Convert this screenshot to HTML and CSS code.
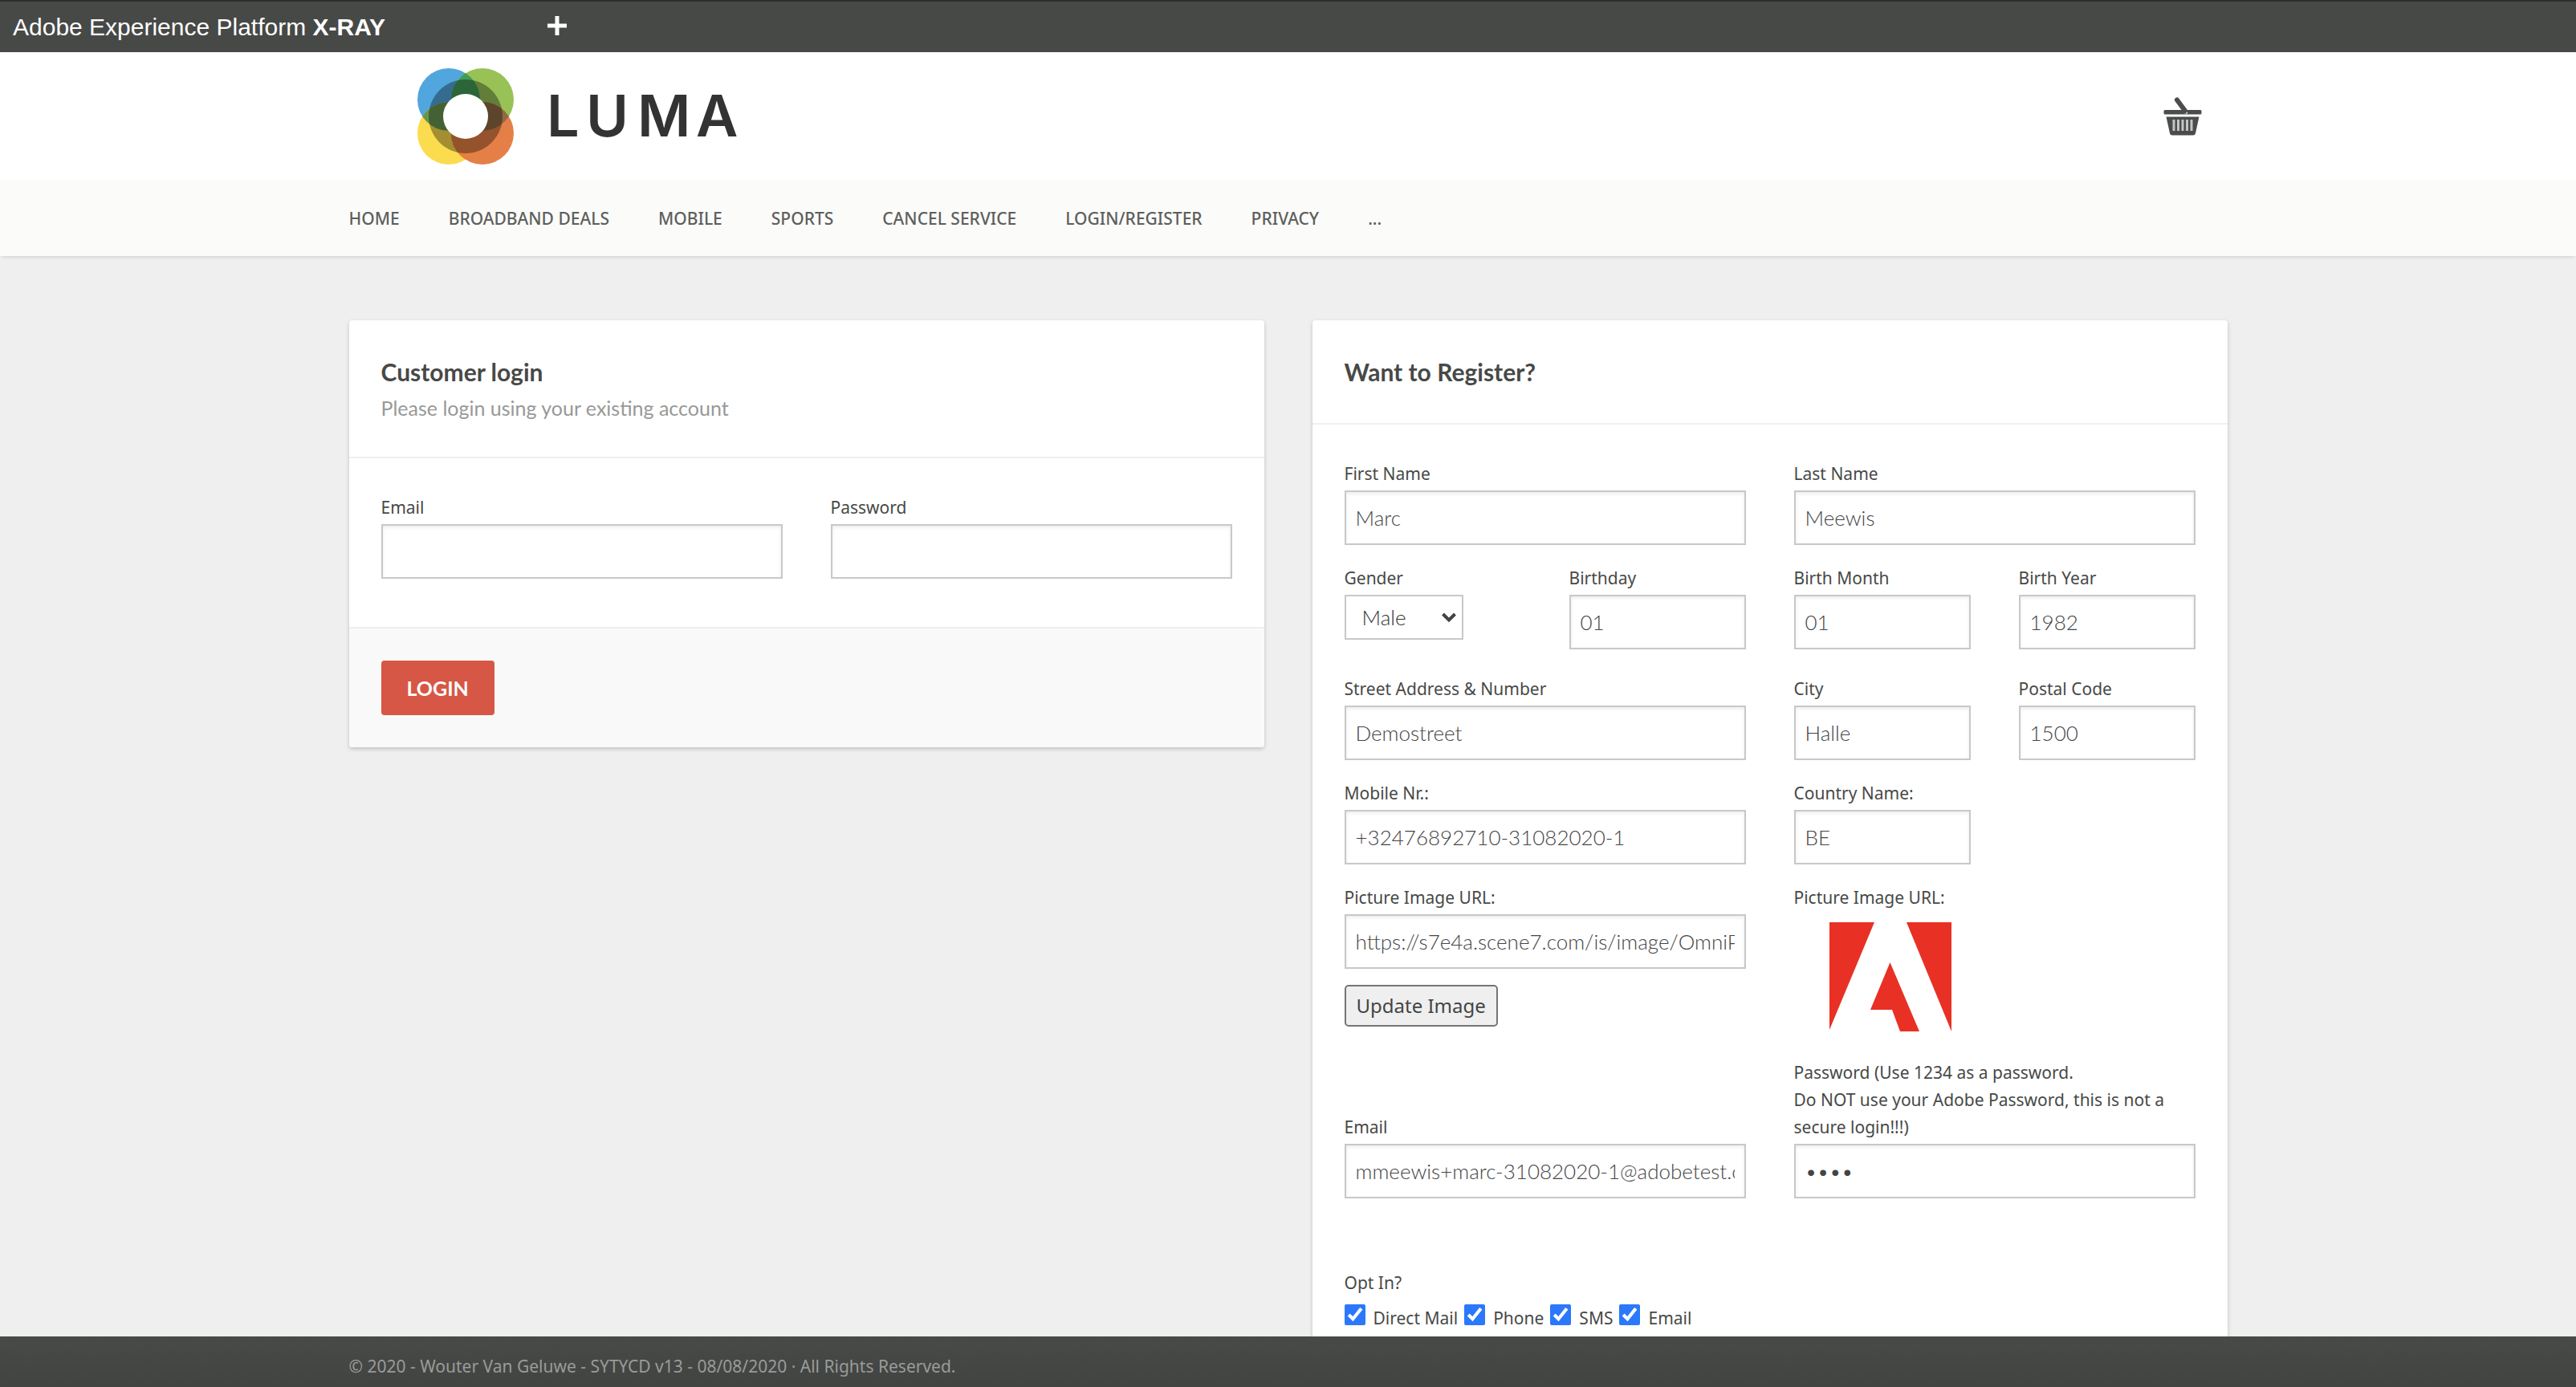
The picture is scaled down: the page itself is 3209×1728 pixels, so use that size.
FILE: index.html
```html
<!DOCTYPE html>
<html lang="en">
<head>
<meta charset="utf-8">
<title>Luma - Login / Register</title>
<link rel="stylesheet" href="styles.css">
</head>
<body>
<div class="xray">
  <span class="xray-title">Adobe Experience Platform <strong>X-RAY</strong></span>
  <button class="xray-open" type="button" aria-label="Open X-ray panel">
    <svg width="24" height="24" viewBox="0 0 24 24"><path d="M12 2.500v19M2.500 12h19" stroke="#fff" stroke-width="5" stroke-linecap="square" fill="none"/></svg>
  </button>
</div>

<header class="masthead">
  <div class="container masthead-row">
    <a class="logo" href="#" aria-label="Luma">
      <svg width="410" height="120" viewBox="0 0 410 120">
        <clipPath id="top-left"><circle cx="39" cy="39" r="39"/></clipPath>
        <clipPath id="bottom-right"><circle cx="81" cy="81" r="39"/></clipPath>
        <circle cx="39" cy="39" r="39" fill="#51a6dd"/>
        <circle cx="81" cy="39" r="39" fill="#98c256"/>
        <circle cx="39" cy="81" r="39" fill="#fbdc4e"/>
        <circle cx="81" cy="81" r="39" fill="#e57f48"/>
        <g clip-path="url(#top-left)">
          <circle cx="81" cy="39" r="39" fill="#429c57"/>
          <circle cx="39" cy="81" r="39" fill="#69954f"/>
        </g>
        <g clip-path="url(#bottom-right)">
          <circle cx="39" cy="81" r="39" fill="#e5803f"/>
          <circle cx="81" cy="39" r="39" fill="#8f6b42"/>
        </g>
        <circle cx="60" cy="60" r="46" fill="#000" fill-opacity=".35"/>
        <circle cx="60" cy="60" r="28" fill="#fff"/>
        <text class="logo-word" x="161 210 274 347" y="85">LUMA</text>
      </svg>
    </a>
    <a class="basket" href="#" aria-label="Shopping basket">
      <svg width="48" height="48" viewBox="0 0 48 48">
        <path d="M17 3.500L27 17" stroke="#4b4d4c" stroke-width="6" stroke-linecap="round"/>
        <path d="M2 16h21l4 4.500h3V16h16a1.500 1.500 0 0 1 1.500 1.500v2.500a1.500 1.500 0 0 1-1.500 1.500H2A1.500 1.500 0 0 1 .5 20v-2.500A1.500 1.500 0 0 1 2 16z" fill="#4b4d4c"/>
        <path d="M3.500 24.500h41L40 45a3 3 0 0 1-3 2.500H11A3 3 0 0 1 8 45z" fill="#4b4d4c"/>
        <path d="M13 28v14M18.500 28v14M24 28v14M29.500 28v14M35 28v14" stroke="#c4c4c4" stroke-width="3"/>
      </svg>
    </a>
  </div>
</header>

<nav class="mainnav">
  <ul class="container nav-list">
    <li><a href="#">HOME</a></li>
    <li><a href="#">BROADBAND DEALS</a></li>
    <li><a href="#">MOBILE</a></li>
    <li><a href="#">SPORTS</a></li>
    <li><a href="#">CANCEL SERVICE</a></li>
    <li><a href="#">LOGIN/REGISTER</a></li>
    <li><a href="#">PRIVACY</a></li>
    <li><a href="#">...</a></li>
  </ul>
</nav>

<main class="content">
  <div class="container columns">
    <section class="card">
      <div class="card-head">
        <h1>Customer login</h1>
        <p>Please login using your existing account</p>
      </div>
      <form>
        <div class="card-body fields">
          <div class="field half">
            <label for="login-email">Email</label>
            <input id="login-email" type="text">
          </div>
          <div class="field half">
            <label for="login-password">Password</label>
            <input id="login-password" type="password">
          </div>
        </div>
        <div class="card-foot">
          <button class="btn-primary" type="button">LOGIN</button>
        </div>
      </form>
    </section>

    <section class="card">
      <div class="card-head">
        <h1>Want to Register?</h1>
      </div>
      <form class="card-body fields">
        <div class="field half">
          <label for="first">First Name</label>
          <input id="first" type="text" value="Marc">
        </div>
        <div class="field half">
          <label for="last">Last Name</label>
          <input id="last" type="text" value="Meewis">
        </div>

        <div class="field field-spaced">
          <label for="gender">Gender</label>
          <div class="select">
            <select id="gender"><option>Male</option><option>Female</option></select>
            <svg class="select-arrow" width="20" height="14" viewBox="0 0 20 14"><path d="M2.500 3L10 10.500L17.500 3" stroke="#444" stroke-width="4" fill="none"/></svg>
          </div>
        </div>
        <div class="field">
          <label for="day">Birthday</label>
          <input id="day" type="text" value="01">
        </div>
        <div class="field">
          <label for="month">Birth Month</label>
          <input id="month" type="text" value="01">
        </div>
        <div class="field">
          <label for="year">Birth Year</label>
          <input id="year" type="text" value="1982">
        </div>

        <div class="field half">
          <label for="street">Street Address &amp; Number</label>
          <input id="street" type="text" value="Demostreet">
        </div>
        <div class="field">
          <label for="city">City</label>
          <input id="city" type="text" value="Halle">
        </div>
        <div class="field">
          <label for="postal">Postal Code</label>
          <input id="postal" type="text" value="1500">
        </div>

        <div class="field half">
          <label for="mobile">Mobile Nr.:</label>
          <input id="mobile" type="text" value="+32476892710-31082020-1">
        </div>
        <div class="field half">
          <label for="country">Country Name:</label>
          <input id="country" class="short" type="text" value="BE">
        </div>

        <div class="field half">
          <label for="picture">Picture Image URL:</label>
          <input id="picture" type="text" value="https://s7e4a.scene7.com/is/image/OmniPS/adobe">
          <button class="btn-plain" type="button">Update Image</button>
        </div>
        <div class="field half">
          <span class="caption">Picture Image URL:</span>
          <svg class="picture" width="240" height="156" viewBox="0 0 240 156" role="img" aria-label="Adobe">
            <path d="M44 10h56L44 144zM140 10h56v136zM119.500 60L156 146h-24l-10-27H95z" fill="#e83124"/>
          </svg>
        </div>

        <div class="field half field-end">
          <label for="email">Email</label>
          <input id="email" type="text" value="mmeewis+marc-31082020-1@adobetest.com">
        </div>
        <div class="field half">
          <label for="password">Password (Use 1234 as a password.<br>Do NOT use your Adobe Password, this is not a secure login!!!)</label>
          <input id="password" type="password" value="1234">
        </div>

        <fieldset class="optin">
          <legend>Opt In?</legend>
          <div class="checks">
            <label><input type="checkbox" checked> Direct Mail</label>
            <label><input type="checkbox" checked> Phone</label>
            <label><input type="checkbox" checked> SMS</label>
            <label><input type="checkbox" checked> Email</label>
          </div>
        </fieldset>
      </form>
    </section>
  </div>
</main>

<footer class="footer">
  <div class="container">© 2020 - Wouter Van Geluwe - SYTYCD v13 - 08/08/2020 · All Rights Reserved.</div>
</footer>
</body>
</html>
```
FILE: styles.css
```css
* {
  box-sizing: border-box;
}

body {
  display: flex;
  flex-direction: column;
  height: 100vh;
  margin: 0;
  overflow: hidden;
  background: #efefef;
  color: #474947;
  font-family: "Noto Sans", "Open Sans", sans-serif;
  font-size: 21px;
  line-height: 34px;
}

a {
  color: inherit;
  text-decoration: none;
}

.container {
  width: 100%;
  max-width: 2340px;
  margin: 0 auto;
}

/* X-ray bar */
.xray {
  display: flex;
  flex: none;
  align-items: center;
  gap: 202px;
  height: 65px;
  padding: 0 16px;
  border-top: 2px solid #2d2e2d;
  background: #474947;
  color: #fff;
  font-family: "Liberation Sans", Arial, sans-serif;
  font-size: 30px;
}

.xray-open {
  display: flex;
  padding: 0 0 4px;
  border: 0;
  background: none;
}

/* Logo row */
.masthead {
  flex: none;
  background: #fff;
}

.masthead-row {
  display: flex;
  align-items: center;
  justify-content: space-between;
  padding: 20px 32px 20px 85px;
}

.logo,
.basket {
  display: flex;
}

.logo-word {
  fill: #333;
  font-family: Inter, sans-serif;
  font-size: 72px;
  font-weight: 600;
}

/* Navigation */
.mainnav {
  z-index: 1;
  flex: none;
  background: #fbfbf9;
  box-shadow: 0 3px 4px -2px rgba(0, 0, 0, .14);
}

.nav-list {
  display: flex;
  gap: 61px;
  padding: 30px 0;
  color: #5d5f5d;
  font-weight: 500;
  list-style: none;
}

/* Cards */
.content {
  flex: 1;
  min-height: 0;
  padding: 80px 40px 0;
  overflow: hidden;
}

.columns {
  display: grid;
  grid-template-columns: 1fr 1fr;
  align-items: start;
  gap: 60px;
}

.card {
  border-radius: 4px;
  background: #fff;
  box-shadow: 0 2px 5px rgba(0, 0, 0, .2);
}

.card-head {
  padding: 40px;
  border-bottom: 2px solid #efefef;
  font-family: Lato, sans-serif;
}

.card-head h1 {
  margin: 0;
  font-size: 30px;
  font-weight: 700;
  line-height: 48px;
}

.card-head p {
  margin: 0;
  color: #989998;
  font-size: 25px;
  line-height: 42px;
}

.card-body {
  padding: 44px 40px 60px;
}

.fields {
  display: grid;
  grid-template-columns: repeat(4, 1fr);
  gap: 24px 60px;
}

.field {
  display: flex;
  flex-direction: column;
  align-items: flex-start;
}

.half {
  grid-column: span 2;
}

.field-end {
  justify-content: flex-end;
}

.field-spaced {
  padding-bottom: 20px;
}

.field label,
.caption {
  margin-bottom: 4px;
}

.field input {
  width: 100%;
  height: 68px;
  padding: 0 12px;
  border: 2px solid #c8c8c8;
  border-radius: 0;
  background: #fff;
  box-shadow: inset 0 2px 4px rgba(0, 0, 0, .08);
  color: #444;
  font: 300 26px/34px Lato, sans-serif;
}

.field .short {
  width: calc(50% - 30px);
}

.select {
  position: relative;
}

.select select {
  width: 148px;
  height: 56px;
  padding: 0 20px;
  border: 2px solid #c8c8c8;
  border-radius: 0;
  background: #fff;
  color: #333;
  font: 300 26px/34px Lato, sans-serif;
  appearance: none;
}

.select-arrow {
  position: absolute;
  top: 21px;
  right: 8px;
  pointer-events: none;
}

.btn-primary {
  height: 68px;
  padding: 0 32px;
  border: 0;
  border-radius: 4px;
  background: #d65745;
  color: #fff;
  font: 700 25px/34px Lato, sans-serif;
}

.btn-plain {
  height: 52px;
  margin-top: 20px;
  padding: 0 13px;
  border: 2px solid #757575;
  border-radius: 5px;
  background: #efefef;
  color: #444;
  font: 400 24px/34px "Noto Sans", sans-serif;
}

.card-foot {
  padding: 40px;
  border-top: 2px solid #efefef;
  border-radius: 0 0 4px 4px;
  background: #f9f9f9;
  line-height: 0;
}

.optin {
  grid-column: 1 / -1;
  margin: 64px 0 0;
  padding: 0;
  border: 0;
}

.optin legend {
  padding: 0;
}

.checks {
  display: flex;
  gap: 8px;
  padding-top: 10px;
}

.checks label {
  display: flex;
  gap: 10px;
}

.checks input {
  width: 26px;
  height: 26px;
  margin: 0;
  accent-color: #2b78fa;
}

/* Footer */
.footer {
  z-index: 1;
  flex: none;
  padding: 20px 0 9px;
  background: linear-gradient(#484a48, #424442);
  color: #999b99;
}
```
